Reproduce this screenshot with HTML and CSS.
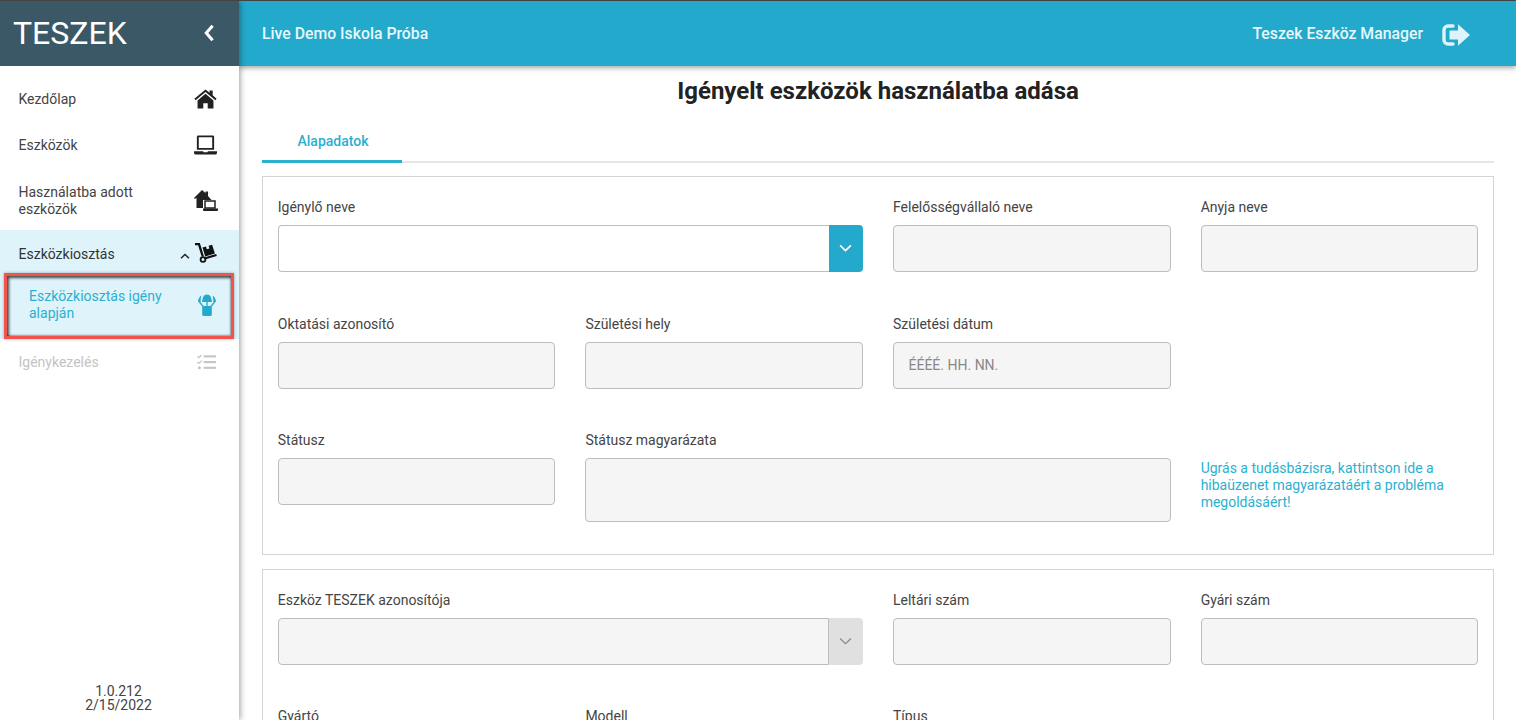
FILE: index.html
```html
<!DOCTYPE html>
<html lang="hu">
<head>
<meta charset="utf-8">
<title>TESZEK</title>
<link rel="stylesheet" href="styles.css">
</head>
<body>
<div class="app">
  <aside class="sidebar">
    <div class="brand">
      <span class="brand-name">TESZEK</span>
      <svg class="brand-chevron" viewBox="0 0 12 20"><path d="M10 2 3 10l7 8" fill="none" stroke="#fff" stroke-width="3.4"/></svg>
    </div>
    <nav class="nav">
      <a class="nav-item"><span class="nav-text">Kezdőlap</span>
        <svg class="icon" viewBox="0 0 24 20"><path d="M12 0 .4 9.7l1.300 1.600L12 2.800l10.300 8.500 1.300-1.600L19.500 6.200V1h-3.200v2.600zM12 4.600 3.700 11.500V20h6v-5.500h4.600V20h6v-8.500z" fill="#222"/></svg>
      </a>
      <a class="nav-item"><span class="nav-text">Eszközök</span>
        <svg class="icon" viewBox="0 0 24 20"><path d="M3 1.500A1.500 1.500 0 0 1 4.500 0h15A1.500 1.500 0 0 1 21 1.500V15H3zM5 2v11h14V2zM0 16.500h9.500l.5 1h4l.5-1H24V18a2 2 0 0 1-2 2H2a2 2 0 0 1-2-2z" fill="#222" fill-rule="evenodd"/></svg>
      </a>
      <a class="nav-item nav-item-tall"><span class="nav-text">Használatba adott eszközök</span>
        <svg class="icon icon-homelap" viewBox="0 0 24 22"><path d="M8 0 0 8l1 1 1.500-1.300V18h6.500V10h8.500L14 6V1.500h-2.500V3z" fill="#222"/><rect x="11" y="11" width="10" height="7" fill="none" stroke="#222" stroke-width="1.500"/><path d="M9 18.500h15V20a1 1 0 0 1-1 1H10a1 1 0 0 1-1-1z" fill="#222"/></svg>
      </a>
      <div class="nav-group">
        <a class="nav-item nav-item-parent"><span class="nav-text">Eszközkiosztás</span>
          <svg class="caret" viewBox="0 0 10 6"><path d="M1 5.200 5 1.500l4 3.700" fill="none" stroke="#222" stroke-width="1.500"/></svg>
          <svg class="icon icon-dolly" viewBox="0 0 23 20"><path d="M1 1.200h4l3.800 12.300" fill="none" stroke="#111" stroke-width="2.300"/><path d="M10.500 15.500 22.500 12" fill="none" stroke="#111" stroke-width="2.300"/><circle cx="9" cy="16.500" r="2.400" fill="none" stroke="#111" stroke-width="1.800"/><path d="M8.500 4.500 12 3.500l.8 2.800 2.600-.8-.8-2.800 3.500-1 2.800 8.800-9.700 3z" fill="#111"/></svg>
        </a>
        <a class="nav-item nav-sub"><span class="nav-text">Eszközkiosztás igény alapján</span>
          <svg class="icon icon-para" viewBox="0 0 18 22"><g fill="#23a9cb"><path d="M9 .5C5.500.5 4.500 4 4 8h10C13.500 4 12.500.5 9 .5z"/><path d="M3.500 1.500C1 3 0 5.500 0 8h2.600c0-2.500.3-4.500.9-6.500zM14.500 1.500C17 3 18 5.500 18 8h-2.600c0-2.500-.3-4.500-.9-6.500z"/></g><path d="m1.500 8 4 5M16.500 8l-4 5M9 8v5" stroke="#23a9cb" stroke-width="1.300" fill="none"/><rect x="5.200" y="13" width="7.600" height="8" rx=".6" fill="#23a9cb" stroke="#23a9cb" stroke-width="2"/></svg>
        </a>
      </div>
      <a class="nav-item nav-disabled"><span class="nav-text">Igénykezelés</span>
        <svg class="icon icon-list" viewBox="0 0 20 16"><g fill="#c4c4c4"><rect x="7" y="1" width="13" height="2.200"/><rect x="7" y="7" width="13" height="2.200"/><rect x="7" y="13" width="13" height="2.200"/></g><path d="m.5 2 1.500 1.500L5 .5M.5 8 2 9.500l3-3" fill="none" stroke="#c4c4c4" stroke-width="1.300"/><circle cx="2.500" cy="14" r="1.600" fill="#c4c4c4"/></svg>
      </a>
    </nav>
    <div class="version">
      <div>1.0.212</div>
      <div>2/15/2022</div>
    </div>
  </aside>

  <div class="main">
    <header class="topbar">
      <span class="school">Live Demo Iskola Próba</span>
      <span class="manager">Teszek Eszköz Manager</span>
      <svg class="logout" viewBox="0 0 28 24"><path d="M11 3H6a4 4 0 0 0-4 4v10a4 4 0 0 0 4 4h5" fill="none" stroke="#ddf4fb" stroke-width="3.400" stroke-linecap="round"/><path d="M7.500 7.500H16V1.300L28 12 16 22.700v-6.200H7.500z" fill="#ddf4fb"/></svg>
    </header>
    <div class="content">
      <h1 class="page-title">Igényelt eszközök használatba adása</h1>
      <div class="tabs"><span class="tab">Alapadatok</span></div>

      <section class="card">
        <div class="field span-2">
          <label class="label">Igénylő neve</label>
          <div class="select">
            <div class="select-value"></div>
            <div class="select-btn"><svg viewBox="0 0 12 8"><path d="M1 1.200 6 6l5-4.800" fill="none" stroke="#fff" stroke-width="1.600"/></svg></div>
          </div>
        </div>
        <div class="field"><label class="label">Felelősségvállaló neve</label><div class="input"></div></div>
        <div class="field"><label class="label">Anyja neve</label><div class="input"></div></div>

        <div class="field"><label class="label">Oktatási azonosító</label><div class="input"></div></div>
        <div class="field"><label class="label">Születési hely</label><div class="input"></div></div>
        <div class="field"><label class="label">Születési dátum</label><div class="input input-placeholder">ÉÉÉÉ. HH. NN.</div></div>
        <div class="field"></div>

        <div class="field field-last"><label class="label">Státusz</label><div class="input"></div></div>
        <div class="field field-last span-2"><label class="label">Státusz magyarázata</label><div class="input textarea"></div></div>
        <div class="field field-last help"><a class="help-link">Ugrás a tudásbázisra, kattintson ide a hibaüzenet magyarázatáért a probléma megoldásáért!</a></div>
      </section>

      <section class="card">
        <div class="field span-2">
          <label class="label">Eszköz TESZEK azonosítója</label>
          <div class="select select-disabled">
            <div class="select-value"></div>
            <div class="select-btn"><svg viewBox="0 0 12 8"><path d="M1 1.200 6 6l5-4.800" fill="none" stroke="#8a8a8a" stroke-width="1.200"/></svg></div>
          </div>
        </div>
        <div class="field"><label class="label">Leltári szám</label><div class="input"></div></div>
        <div class="field"><label class="label">Gyári szám</label><div class="input"></div></div>

        <div class="field"><label class="label">Gyártó</label><div class="input"></div></div>
        <div class="field"><label class="label">Modell</label><div class="input"></div></div>
        <div class="field"><label class="label">Típus</label><div class="input"></div></div>
      </section>
    </div>
  </div>
</div>
</body>
</html>
```
FILE: styles.css
```css
* { box-sizing: border-box; }
html, body { margin: 0; height: 100%; overflow: hidden; }
body { font-family: Roboto, "Liberation Sans", sans-serif; font-size: 14px; color: #444; background: #fff; }

.app { display: flex; height: 720px; border-top: 1px solid #444; overflow: hidden; }

.sidebar { width: 239px; flex: none; display: flex; flex-direction: column; background: #fff; box-shadow: 1px 0 6px rgba(0,0,0,.4); z-index: 2; }
.brand { height: 65px; flex: none; background: #3b5866; display: flex; align-items: center; justify-content: space-between; padding: 0 24px 2px 13px; }
.brand-name { font-size: 32px; color: #fff; line-height: 1; }
.brand-chevron { width: 12px; height: 18px; }

.nav { flex: 1; display: flex; flex-direction: column; padding-top: 10px; }
.nav-item { display: flex; align-items: center; justify-content: space-between; min-height: 46px; padding: 0 22px 0 18.5px; color: #444; line-height: 17px; }
.nav-item-tall { min-height: 62px; padding-top: 4px; }
.nav-text { display: block; max-width: 135px; }
.icon { width: 23px; height: 20px; flex: none; }
.icon-homelap { width: 24px; height: 22px; margin-right: -1px; }

.nav-group { background: #dff3fb; height: 109px; }
.nav-item-parent { min-height: 48px; color: #333; }
.nav-item-parent .nav-text { flex: 1; max-width: none; }
.caret { width: 10px; height: 6px; margin-right: 4px; margin-top: 3px; flex: none; }
.icon-dolly { margin-top: -2px; }

.nav-sub { position: relative; margin: -5px 5px 0 4px; min-height: 66px; padding: 0 15.5px 3px 22px; border: 3px solid #f0544c; color: #2bb0d0; box-shadow: inset 2px 2px 3px rgba(0,0,0,.7), inset -1px -1px 2px rgba(0,0,0,.35), 0 0 3px rgba(0,0,0,.3); }
.nav-sub .nav-text { max-width: 150px; }
.icon-para { width: 18px; height: 22px; }

.nav-disabled { color: #c4c4c4; }
.icon-list { width: 19px; height: 16px; margin-right: 1px; }

.version { text-align: center; line-height: 14.5px; padding: 0 2px 7.5px 0; color: #444; }

.main { flex: 1; min-width: 0; display: flex; flex-direction: column; }
.topbar { height: 65px; flex: none; display: flex; align-items: center; background: #23a9cb; color: #e6f8fd; padding: 0 46px 0 23px; font-weight: 500; font-size: 15.8px; box-shadow: 0 2px 5px rgba(0,0,0,.35); z-index: 1; }
.school { flex: 1; }
.manager { margin-right: 19px; }
.logout { width: 28px; height: 24px; margin-top: 3px; }

.content { flex: 1; padding: 0 22px 0 23px; overflow: hidden; }
.page-title { margin: 11px 0 0; text-align: center; font-size: 24px; line-height: 28px; font-weight: 700; color: #222; }
.tabs { margin-top: 13px; height: 45px; border-bottom: 2px solid #e6e6e6; }
.tab { display: block; width: 140px; height: 45px; padding-top: 15px; padding-left: 2px; text-align: center; color: #2bb0d0; font-weight: 500; border-bottom: 3px solid #2bb0d0; }

.card { display: grid; grid-template-columns: repeat(4, 1fr); column-gap: 30px; border: 1px solid #d4d4d4; padding: 21px 14.75px 0 14.75px; margin-top: 13.5px; }
.tabs + .card { margin-top: 13px; }
.span-2 { grid-column: span 2; }
.field { display: flex; flex-direction: column; padding-bottom: 42.5px; min-width: 0; }
.field-last { padding-bottom: 32px; }
.label { display: block; height: 18px; line-height: 18px; margin-bottom: 9px; color: #444; }

.input { height: 47px; background: #f5f5f5; border: 1px solid #bdbdbd; border-radius: 4px; }
.input-placeholder { padding: 0 14.5px; line-height: 45px; color: #888; }
.textarea { height: 64px; }

.select { display: flex; height: 47px; }
.select-value { flex: 1; border: 1px solid #bdbdbd; border-right: none; border-radius: 4px 0 0 4px; background: #fff; }
.select-btn { width: 34.5px; flex: none; background: #23a9cb; border-radius: 0 4px 4px 0; display: flex; align-items: center; justify-content: center; }
.select-btn svg { width: 13px; height: 9px; }
.select-disabled .select-value { background: #f5f5f5; border-right: 1px solid #bdbdbd; }
.select-disabled .select-btn { background: #e0e0e0; }

.help { padding-top: 29px; }
.help-link { color: #2bb0d0; line-height: 17px; display: block; }
```
